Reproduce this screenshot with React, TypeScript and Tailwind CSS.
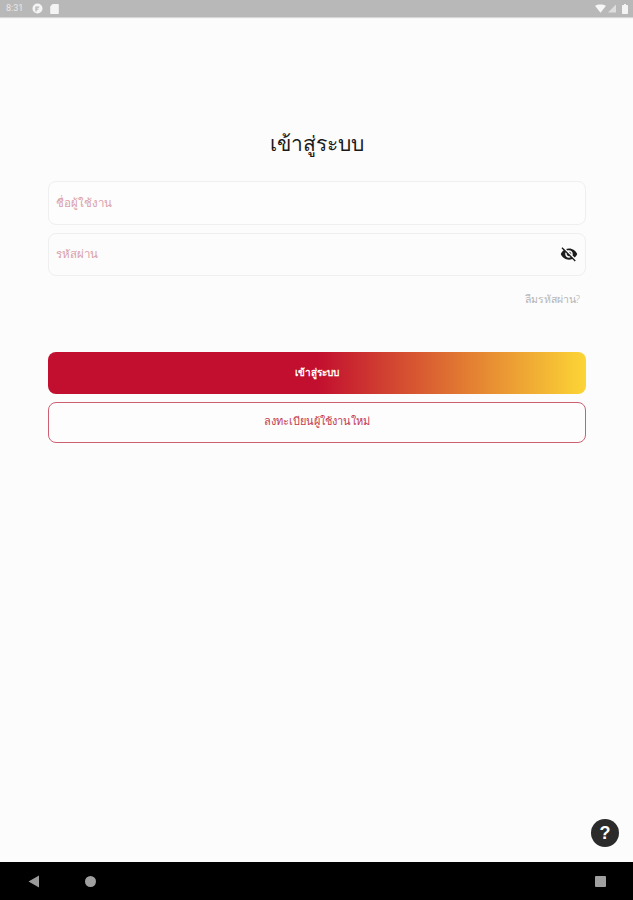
import { useState } from "react";

const thai = "font-['Noto_Sans','Liberation_Sans',sans-serif]";

function StatusBar() {
  return (
    <div className="flex h-[17px] shrink-0 items-center justify-between bg-[#b8b8b8] pl-[6px] pr-[5px] shadow-[0_1px_1px_#d8d8d8]">
      <div className="flex items-center gap-[9px]">
        <span className="font-['Roboto',sans-serif] text-[9px] leading-none text-[#e8e8e8]">8:31</span>
        <div className="flex items-center gap-[7px]">
          {/* app notification icons */}
          <svg width="11" height="11" viewBox="0 0 11 11">
            <circle cx="5.5" cy="5.5" r="5" fill="#f4f4f4" />
            <path d="M4 8.5V4.2h3.2M4 6.2h2.4" stroke="#b8b8b8" strokeWidth="1.3" fill="none" />
          </svg>
          <svg width="9" height="11" viewBox="0 0 9 11">
            <path d="M2.5 1H8a.8.8 0 0 1 .8.8v8.4a.8.8 0 0 1-.8.8H1a.8.8 0 0 1-.8-.8V3.4z" fill="#f4f4f4" />
          </svg>
        </div>
      </div>
      <div className="flex items-center gap-[2px]">
        <svg width="11" height="9" viewBox="0 0 12 9">
          <path d="M0 1.6C3.4-.5 8.6-.5 12 1.6L6 9z" fill="#f6f6f6" />
        </svg>
        <svg width="8" height="9" viewBox="0 0 9 9">
          <path d="M9 0v9H0z" fill="#dedede" />
        </svg>
        <svg width="6" height="10" viewBox="0 0 6 10" className="ml-[4px]">
          <path d="M2 0h2v1h1.2a.8.8 0 0 1 .8.8v7.4a.8.8 0 0 1-.8.8H.8a.8.8 0 0 1-.8-.8V1.800a.8.8 0 0 1 .8-.8H2z" fill="#f4f4f4" />
        </svg>
      </div>
    </div>
  );
}

function NavBar() {
  return (
    <div className="flex h-[38px] shrink-0 items-center justify-between bg-black pl-[28px] pr-[27px]">
      <div className="flex items-center gap-[45px]">
        <svg width="12" height="13" viewBox="0 0 12 13">
          <path d="M11 .5v12L.5 6.500z" fill="#9a9a9a" />
        </svg>
        <div className="h-[11px] w-[11px] rounded-full bg-[#a0a0a0]" />
      </div>
      <div className="h-[11px] w-[11px] rounded-[1px] bg-[#a0a0a0]" />
    </div>
  );
}

export default function App() {
  const [username, setUsername] = useState("");
  const [password, setPassword] = useState("");

  return (
    <div className={`flex h-[900px] flex-col bg-[#fcfcfc] ${thai}`}>
      <StatusBar />

      <main className="relative flex flex-1 flex-col pl-[48px] pr-[47px] pt-[109px]">
        <h1 className="h-[34px] text-center text-[21px] leading-[34px] text-[#1a1a1a]">เข้าสู่ระบบ</h1>

        <div className="mt-[21px] flex flex-col gap-[8px]">
          <input
            value={username}
            onChange={(e) => setUsername(e.target.value)}
            placeholder="ชื่อผู้ใช้งาน"
            className="h-[44px] w-full rounded-[8px] border border-[#efefef] bg-[#fdfdfd] px-[7px] pb-[2px] text-[11.5px] font-light outline-none placeholder:text-[#d9a0aa]"
          />
          <div className="relative">
            <input
              type="password"
              value={password}
              onChange={(e) => setPassword(e.target.value)}
              placeholder="รหัสผ่าน"
              className="h-[43px] w-full rounded-[8px] border border-[#efefef] bg-[#fcfcfc] px-[7px] pb-[2px] text-[11.5px] font-light outline-none placeholder:text-[#d9a0aa]"
            />
            {/* visibility off */}
            <svg viewBox="0 0 24 24" className="absolute right-[8px] top-[12px] h-[18px] w-[18px] fill-[#1c1c1c]">
              <path d="M12 7c2.76 0 5 2.24 5 5 0 .65-.13 1.26-.36 1.83l2.92 2.92c1.51-1.26 2.7-2.89 3.43-4.75-1.73-4.39-6-7.5-11-7.5-1.4 0-2.74.25-3.98.7l2.16 2.16C10.74 7.13 11.35 7 12 7zM2 4.27l2.28 2.28.46.46C3.08 8.3 1.78 10.02 1 12c1.73 4.39 6 7.5 11 7.5 1.55 0 3.03-.3 4.38-.84l.42.42L19.73 22 21 20.73 3.27 3 2 4.27zM7.530 9.800l1.550 1.550c-.05.21-.08.43-.08.65 0 1.660 1.340 3 3 3 .22 0 .44-.03.65-.08l1.550 1.550c-.67.33-1.410.53-2.200.53-2.760 0-5-2.240-5-5 0-.79.2-1.530.53-2.200zm4.310-.78l3.150 3.150.02-.16c0-1.660-1.340-3-3-3l-.17.01z" />
            </svg>
          </div>
        </div>

        <div className="mt-[13px] h-[20px] pr-[6px] text-right text-[10.5px] font-light leading-[20px] text-[#b5b5b5]">
          ลืมรหัสผ่าน?
        </div>

        <button className="mt-[43px] h-[42px] w-full rounded-[8px] bg-[linear-gradient(90deg,#c20e2f_0%,#c20e2f_50%,#fcd535_100%)] pb-[2px] text-[10px] font-semibold text-white">
          เข้าสู่ระบบ
        </button>
        <button className="mt-[8px] h-[41px] w-full rounded-[8px] border-[1.5px] border-[#cc6070] bg-[#fdfdfd] pb-[2px] text-[11px] text-[#c43a50]">
          ลงทะเบียนผู้ใช้งานใหม่
        </button>

        <button className="absolute bottom-[15px] right-[14px] flex h-[28px] w-[28px] items-center justify-center rounded-full bg-[#2b2b2b] font-['Liberation_Sans',sans-serif] text-[18px] font-bold leading-none text-white">
          ?
        </button>
      </main>

      <NavBar />
    </div>
  );
}
